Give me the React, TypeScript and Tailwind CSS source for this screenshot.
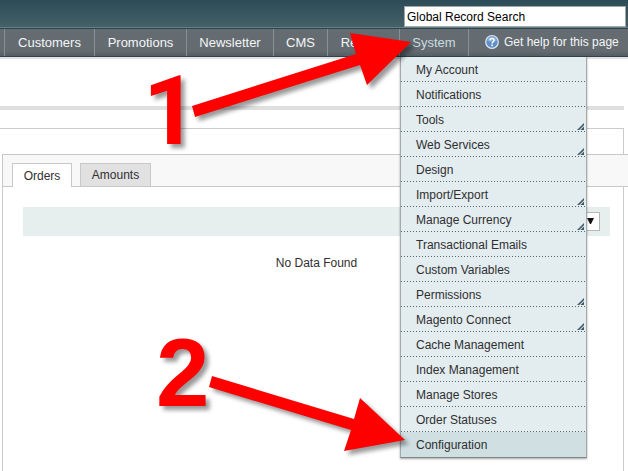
import React from "react";

type MenuItem = { label: string; nested?: boolean };

const navItems = [
  { label: "Customers", width: "w-[90px]" },
  { label: "Promotions", width: "w-[92px]" },
  { label: "Newsletter", width: "w-[87px]" },
  { label: "CMS", width: "w-[54px]" },
  { label: "Reports", width: "w-[72px]" },
];

const systemMenu: MenuItem[] = [
  { label: "My Account" },
  { label: "Notifications" },
  { label: "Tools", nested: true },
  { label: "Web Services", nested: true },
  { label: "Design" },
  { label: "Import/Export", nested: true },
  { label: "Manage Currency", nested: true },
  { label: "Transactional Emails" },
  { label: "Custom Variables" },
  { label: "Permissions", nested: true },
  { label: "Magento Connect", nested: true },
  { label: "Cache Management" },
  { label: "Index Management" },
  { label: "Manage Stores" },
  { label: "Order Statuses" },
  { label: "Configuration" },
];

function NestedMark() {
  return (
    <svg className="absolute right-0.5 bottom-0.5" width="7" height="7" viewBox="0 0 7 7" aria-hidden="true">
      <path d="M0 7 7 0V2.200L2.200 7Z" fill="#3f5868" />
      <path d="M3.400 7 7 3.400V7Z" fill="#3f5868" />
    </svg>
  );
}

function HelpIcon() {
  return (
    <svg width="14" height="14" viewBox="0 0 14 14" aria-hidden="true">
      <circle cx="7" cy="7" r="6.300" fill="#5f8fc6" stroke="#dce9f5" strokeWidth="1.200" />
      <path d="M2 6a5 5 0 0 1 10 0Q7 7.500 2 6Z" fill="#86abd5" />
      <path
        d="M4.900 5.400C5 2.700 9.200 2.900 9.100 5.300 9 6.800 7.100 6.900 7.100 8.500"
        fill="none"
        stroke="#fff"
        strokeWidth="1.500"
      />
      <rect x="6.300" y="9.500" width="1.600" height="1.600" fill="#fff" />
    </svg>
  );
}

function SystemMenu() {
  return (
    <ul className="absolute top-full left-0 z-10 mt-px w-[187px] border border-t-0 border-[#a4a9ab] border-b-[#7b878b] bg-[#e3ecef] shadow-[0_1px_2px_rgba(0,0,0,0.35)]">
      {systemMenu.map((item, i) => {
        const last = i === systemMenu.length - 1;
        return (
          <li key={item.label} className={last ? "bg-[#d0dfe2]" : ""}>
            <a href="#" className="relative block h-[25px] pl-[15px] leading-[26px] text-[#2f2f2f]">
              {item.label}
              {item.nested && <NestedMark />}
              {!last && (
                <span className="absolute inset-x-0 bottom-0 h-px bg-[repeating-linear-gradient(90deg,#51646c_0_1px,transparent_1px_3px)]" />
              )}
            </a>
          </li>
        );
      })}
    </ul>
  );
}

function Header() {
  return (
    <header>
      <div className="flex h-7 items-end justify-end border-b border-[#64818a] bg-linear-to-b from-[#2d4b57] to-[#446168] pr-0.5">
        <input
          type="text"
          aria-label="Global Record Search"
          defaultValue="Global Record Search"
          className="h-[21px] w-[222px] border border-[#a5a5a5] bg-white px-0.5 text-black outline-none"
        />
      </div>
      <nav className="flex h-[29px] border-y border-[#2d444f] bg-linear-to-b from-[#656c71] from-80% to-[#555e64] pl-[5px] text-[#f4f6f6] shadow-[0_2px_0_#e4dfe1]">
        <ul className="-ml-px flex border-l border-[#899094]">
          {navItems.map((item) => (
            <li key={item.label} className={`${item.width} border-r border-[#899094] text-center text-[13px] leading-[27px]`}>
              <a href="#">{item.label}</a>
            </li>
          ))}
          <li className="relative w-[69px] border-r border-[#899094] text-center text-[13px] leading-[27px]">
            <a href="#" className="text-[#c9dde0]">System</a>
            <div className="text-left text-xs">
              <SystemMenu />
            </div>
          </li>
        </ul>
        <a href="#" className="ml-4 flex h-[25px] items-center gap-[5px] whitespace-nowrap">
          <HelpIcon />
          Get help for this page
        </a>
      </nav>
    </header>
  );
}

function Annotations() {
  return (
    <svg
      className="pointer-events-none absolute top-0 left-0 z-20 drop-shadow-[4px_4px_2px_rgba(0,0,0,0.4)]"
      width="628"
      height="471"
      viewBox="0 0 628 471"
      fill="#fe0000"
      fontSize="96"
      fontWeight="700"
    >
      <text x="143" y="144" fontFamily="Roboto, Arial, sans-serif">1</text>
      <path d="M192 106 356 54 350 33 411 42 367 85 360 65 195 117Z" />
      <text x="156" y="406" fontFamily="Liberation Sans, Arial, sans-serif">2</text>
      <path d="M212 376 354 419 360 398 405 440 344 451 351 430 209 387Z" />
    </svg>
  );
}

export default function App() {
  return (
    <div className="relative flex min-h-screen flex-col overflow-hidden bg-white font-['Liberation_Sans',Arial,sans-serif] text-xs text-[#2f2f2f]">
      <Header />
      <main className="flex grow flex-col pt-[49px]">
        <div className="mr-1 h-1 bg-[#dfdfdf]" />
        <section className="mt-[18px] mr-1 flex grow flex-col border-t border-r border-[#cbcbcb] pt-[25px]">
          <div className="-mr-[5px] ml-0.5 flex h-[33px] items-end gap-2 border-y border-l border-[#c7c9c9] bg-[#f8f8f8] pl-[9px]">
            <button className="-mb-px h-6 w-[60px] border border-b-0 border-[#c7c9c9] bg-white">Orders</button>
            <button className="h-[23px] w-[71px] border border-b-0 border-[#c7c9c9] bg-[#e1e1e1]">Amounts</button>
          </div>
          <div className="ml-0.5 grow border-l border-[#cbcbcb] pt-5 pr-[13px] pl-5">
            <div className="flex h-[29px] items-center justify-end bg-[#e6efee] pr-2.5">
              <div className="relative">
                <select aria-label="Select Range" className="h-[19px] w-[105px] appearance-none border border-[#b5b8b9] bg-white pl-1">
                  <option>Last 24 Hours</option>
                </select>
                <svg className="pointer-events-none absolute top-1.5 right-1.5" width="7" height="6" viewBox="0 0 7 6" aria-hidden="true">
                  <path d="M0 0H7L4 6H3Z" fill="#111" />
                </svg>
              </div>
            </div>
            <p className="pt-[18px] text-center leading-[18px]">No Data Found</p>
          </div>
        </section>
      </main>
      <Annotations />
    </div>
  );
}
